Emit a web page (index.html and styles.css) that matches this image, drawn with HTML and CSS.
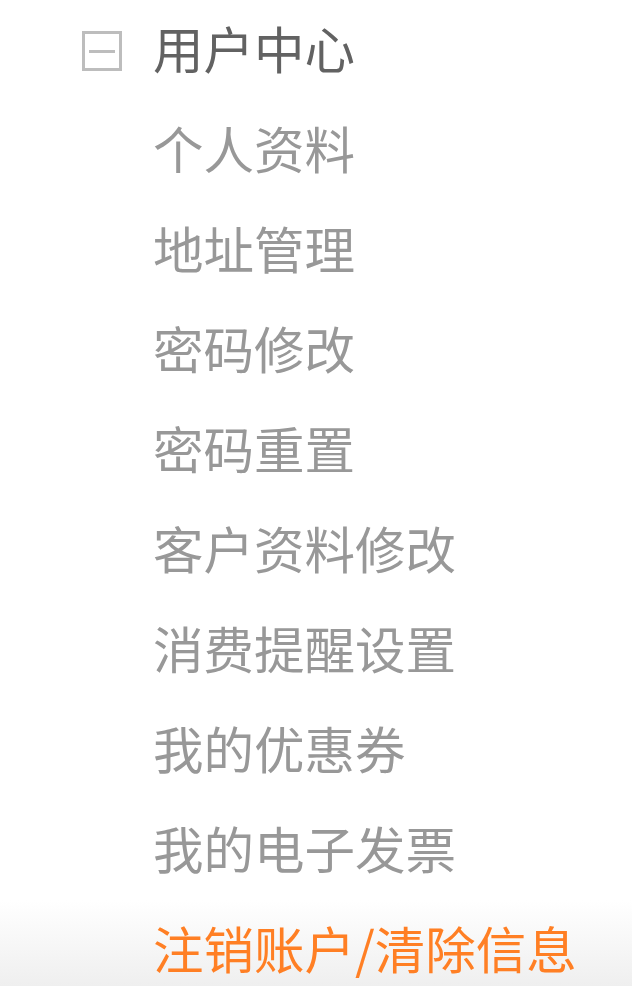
FILE: index.html
```html
<!DOCTYPE html>
<html lang="zh-CN">
<head>
<meta charset="utf-8">
<link rel="stylesheet" href="styles.css">
</head>
<body>
<div class="menu">
  <div class="group-title">
    <span class="toggle"><span class="minus"></span></span>
    <span class="title-text">用户中心</span>
  </div>
  <ul class="items">
    <li>个人资料</li>
    <li>地址管理</li>
    <li>密码修改</li>
    <li>密码重置</li>
    <li>客户资料修改</li>
    <li>消费提醒设置</li>
    <li>我的优惠券</li>
    <li>我的电子发票</li>
    <li class="danger">注销账户/清除信息</li>
  </ul>
</div>
</body>
</html>
```
FILE: styles.css
```css
html, body {
  margin: 0;
  padding: 0;
  height: 986px;
  overflow: hidden;
  background: #fff;
}
.menu {
  height: 986px;
  box-sizing: border-box;
  font-family: "Noto Sans CJK SC", "Noto Sans", sans-serif;
  font-size: 50.5px;
  background: linear-gradient(to bottom, #ffffff 0px, #ffffff 900px, #efefef 986px);
}
.group-title {
  display: flex;
  align-items: center;
  height: 100px;
  padding-left: 82px;
  color: #626262;
}
.toggle {
  width: 40px;
  height: 40px;
  box-sizing: border-box;
  border: 3px solid #bdbdbd;
  display: flex;
  align-items: center;
  justify-content: center;
  margin-right: 31px;
  margin-top: 2px;
}
.minus {
  width: 26px;
  height: 3px;
  background: #bdbdbd;
}
.title-text {
  line-height: 94px;
  padding-bottom: 6px;
}
.items {
  list-style: none;
  margin: 0;
  padding: 0 0 0 153px;
}
.items li {
  height: 94px;
  line-height: 94px;
  padding-bottom: 6px;
  color: #989898;
  white-space: nowrap;
}
.items li.danger {
  color: #ff7f24;
}
```
